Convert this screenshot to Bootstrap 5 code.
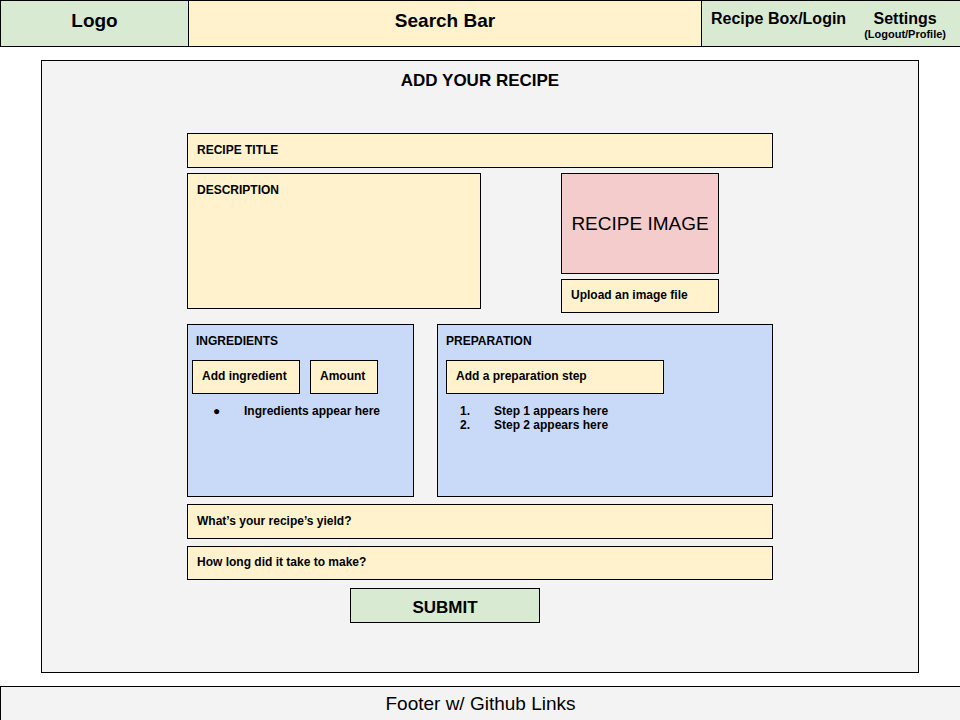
<!DOCTYPE html>
<html lang="en">
<head>
<meta charset="utf-8">
<meta name="viewport" content="width=device-width, initial-scale=1">
<title>Add your recipe</title>
<link href="https://cdn.jsdelivr.net/npm/bootstrap@5.3.0/dist/css/bootstrap.min.css" rel="stylesheet">
<style>
  :root {
    --sheet-green: #d9ead3;
    --sheet-cream: #fff2cc;
    --sheet-blue: #c9daf8;
    --sheet-pink: #f4cccc;
    --sheet-grey: #f3f3f3;
  }
  body { font: 12px/14px "Liberation Sans", Arial, sans-serif; color: #000; background: #fff; }
  .green { background: var(--sheet-green); }
  .blue { background: var(--sheet-blue); }
  .pink { background: var(--sheet-pink); }
  .grey { background: var(--sheet-grey); }
  .text-19 { font-size: 19px; line-height: 22px; }
  .text-17 { font-size: 17px; line-height: 20px; }

  .topbar { display: grid; grid-template-columns: 187fr 513fr 259fr; min-height: 47px; border: 1px solid #000; border-right: 0; }
  .topbar > * + * { border-left: 1px solid #000; }
  .brand { padding: 9px 0; }
  .topbar a { color: #000; text-decoration: none; }
  .search-box { background: var(--sheet-cream); padding: 8px 0 14px; font-size: 19px; line-height: 22px; }
  .search-box::-webkit-search-cancel-button { display: none; }
  .topbar nav { font-size: 16px; line-height: 18px; padding: 9px 14px 0 9px; }
  .topbar small { display: block; font-size: 11px; line-height: 13px; }

  .panel { margin: 13px 41px; padding: 10px 12px 49px; border: 1px solid #000; }
  .recipe-form { max-width: 586px; margin-top: 42px; }
  .field { min-height: 34px; padding: 0 9px 2px; border: 1px solid #000; border-radius: 0; background: var(--sheet-cream); color: #000; font-weight: 700; font-size: 12px; line-height: 14px; }
  .field::placeholder, .search-box::placeholder { color: #000; opacity: 1; font-weight: 700; }
  .field-title { min-height: 35px; }
  textarea.field { height: 136px; padding-top: 9px; resize: none; }
  .media-row { gap: 80px; margin-top: 5px; }
  .media-row textarea { flex: 0 1 294px; min-width: 0; }
  .media-col { flex: 0 0 158px; gap: 5px; }
  .photo { min-height: 101px; border: 1px solid #000; }
  .lists { display: grid; grid-template-columns: 227fr 336fr; gap: 23px; margin-top: 11px; }
  .list-box { min-height: 173px; border: 1px solid #000; padding-top: 9px; }
  .list-box h2 { font: inherit; font-weight: 700; margin: 0 8px 12px; }
  .list-box .field { min-width: 0; }
  .entry-row { gap: 10px; }
  .w-ingredient { width: 108px; }
  .w-amount { width: 68px; }
  .w-step { width: 218px; margin-left: 8px; }
  .items { list-style: none; margin: 10px 0 0; padding: 0 0 0 22px; font-weight: 700; counter-reset: n; }
  .items li { display: grid; grid-template-columns: 34px 1fr; counter-increment: n; }
  ul.items li::before { content: "\25CF"; padding-left: 3px; }
  ol.items li::before { content: counter(n) "."; }
  .details { gap: 7px; margin-top: 7px; }
  .submit-btn { width: 190px; min-height: 35px; margin-left: 163px; padding: 5px 0 0; border: 1px solid #000; border-radius: 0; font-weight: 700; color: #000; }
  .site-footer { min-height: 34px; padding: 6px 0; border: 1px solid #000; border-width: 1px 0 0 1px; }
</style>
<script src="https://cdn.jsdelivr.net/npm/bootstrap@5.3.0/dist/js/bootstrap.bundle.min.js"></script>
</head>
<body class="d-flex flex-column min-vh-100">
<header class="topbar green fw-bold">
  <a href="#" class="brand text-19 text-center">Logo</a>
  <input type="search" class="search-box border-top-0 border-bottom-0 border-end-0 rounded-0 text-center fw-bold w-100" placeholder="Search Bar" aria-label="Search">
  <nav class="d-flex justify-content-between text-center" aria-label="Account">
    <a href="#">Recipe Box/Login</a>
    <a href="#">Settings<small class="fw-bold">(Logout/Profile)</small></a>
  </nav>
</header>

<main class="panel grey flex-grow-1">
  <h1 class="text-17 fw-bold text-center m-0">ADD YOUR RECIPE</h1>
  <form class="recipe-form mx-auto">
    <input type="text" class="field field-title w-100 d-block" placeholder="RECIPE TITLE" aria-label="Recipe title">
    <div class="media-row d-flex">
      <textarea class="field" placeholder="DESCRIPTION" aria-label="Description"></textarea>
      <div class="media-col d-flex flex-column">
        <div class="photo pink text-19 d-flex align-items-center justify-content-center">RECIPE IMAGE</div>
        <button type="button" class="field text-start">Upload an image file</button>
      </div>
    </div>
    <div class="lists">
      <section class="list-box blue">
        <h2>INGREDIENTS</h2>
        <div class="entry-row d-flex ms-1">
          <input type="text" class="field w-ingredient" placeholder="Add ingredient" aria-label="Add ingredient">
          <input type="text" class="field w-amount" placeholder="Amount" aria-label="Amount">
        </div>
        <ul class="items"><li>Ingredients appear here</li></ul>
      </section>
      <section class="list-box blue">
        <h2>PREPARATION</h2>
        <input type="text" class="field w-step d-block" placeholder="Add a preparation step" aria-label="Add a preparation step">
        <ol class="items"><li>Step 1 appears here</li><li>Step 2 appears here</li></ol>
      </section>
    </div>
    <div class="details d-flex flex-column">
      <input type="text" class="field field-title" placeholder="What’s your recipe’s yield?" aria-label="Recipe yield">
      <input type="text" class="field" placeholder="How long did it take to make?" aria-label="Time to make">
    </div>
    <button type="submit" class="submit-btn green text-17 d-block mt-2">SUBMIT</button>
  </form>
</main>

<footer class="site-footer grey text-19 text-center">Footer w/ Github Links</footer>
</body>
</html>
